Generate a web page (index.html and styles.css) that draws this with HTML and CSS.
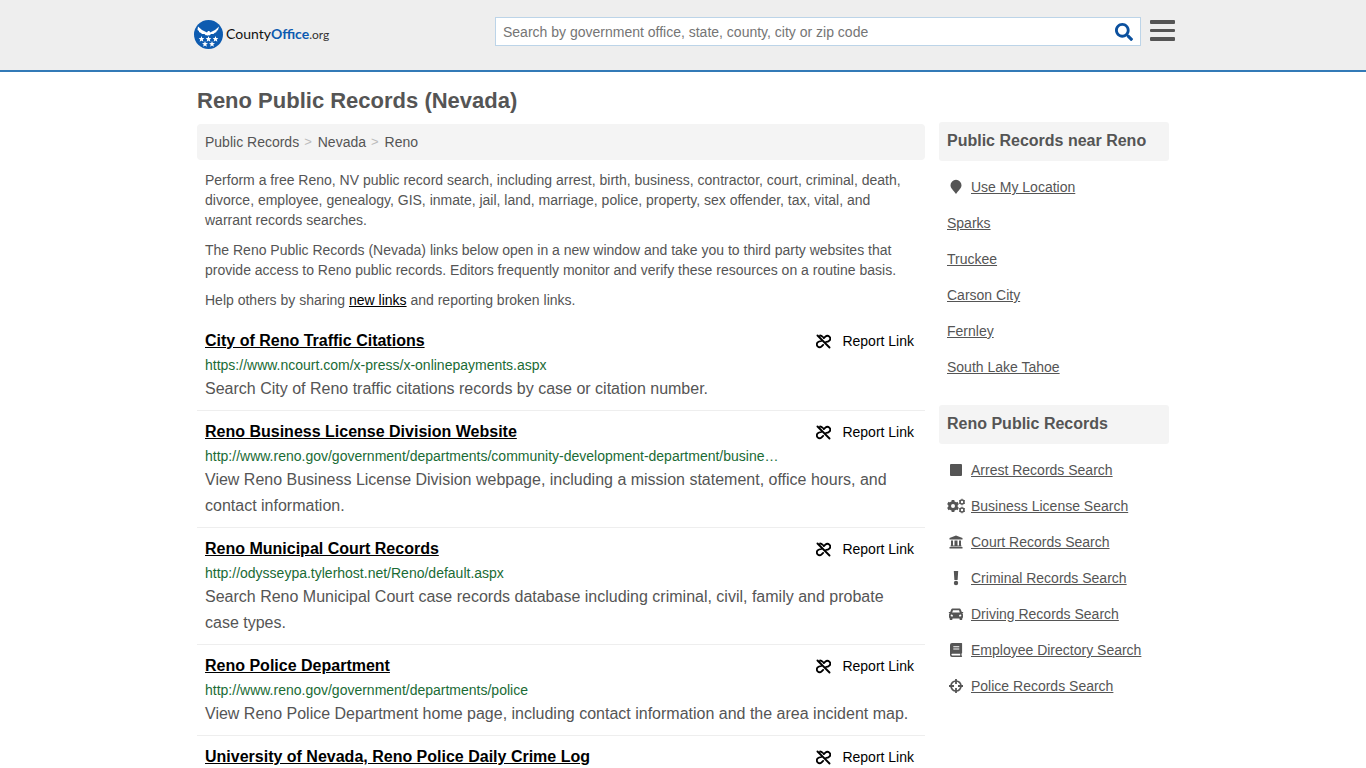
FILE: index.html
```html
<!DOCTYPE html>
<html lang="en">
<head>
  <meta charset="UTF-8">
  <meta name="viewport" content="width=device-width, initial-scale=1.0">
  <title>Reno Public Records (Nevada)</title>
  <link rel="stylesheet" href="styles.css">
</head>
<body>
  <!-- Shared icons -->
  <svg class="sprite" aria-hidden="true">
    <symbol id="icon-unlink" viewBox="2 2 20 20">
      <path fill="none" stroke="currentColor" stroke-width="2.500" stroke-linecap="round" stroke-linejoin="round" d="M4 4l16 16M7.500 4C9 4 10 4.800 11 5.800M12.500 7.500l2-2a3.700 3.700 0 0 1 5.300 5.300c-1.300 1.300-2.800 1.700-4.300 1.700M11.500 16.500l-2 2a3.700 3.700 0 0 1-5.300-5.300c1.300-1.300 2.800-1.700 4.300-1.700"/>
    </symbol>
    <symbol id="star" viewBox="0 0 10 10">
      <path d="M5 0l1.300 3.400 3.700.2-2.900 2.300 1 3.600L5 7.500 1.900 9.500l1-3.600L0 3.600l3.700-.2z"/>
    </symbol>
  </svg>

  <header class="header">
    <div class="header-inner">
      <a class="logo" href="#">
        <svg class="logo-mark" viewBox="0 0 58 58" aria-hidden="true">
          <circle cx="29" cy="29" r="29" fill="#0d5bb0"/>
          <g fill="#fff">
            <path d="M8 13l8 7 8 4 2 1 2-3 3 0 1 3 2-1 8-4 8-7-2 7-3 2 0 2-4 2-2 2-5 0-3 3-2-1-1 2-2-2-2 1-3-3-5 0-2-2-4-2 0-2-3-2z"/>
            <use href="#star" x="9" y="32" width="12" height="12"/>
            <use href="#star" x="23" y="32" width="12" height="12"/>
            <use href="#star" x="37" y="32" width="12" height="12"/>
            <use href="#star" x="16" y="42" width="12" height="12"/>
            <use href="#star" x="30" y="42" width="12" height="12"/>
          </g>
        </svg>
        <span class="logo-text">County<b>Office</b><small>.org</small></span>
      </a>
      <form class="search">
        <input type="text" aria-label="Search" placeholder="Search by government office, state, county, city or zip code">
        <button type="button" aria-label="Submit search">
          <svg viewBox="0 0 512 512"><path fill="currentColor" d="M505 442.700L405.300 343c-4.500-4.500-10.600-7-17-7H372c27.600-35.300 44-79.700 44-128C416 93.100 322.900 0 208 0S0 93.100 0 208s93.100 208 208 208c48.300 0 92.700-16.400 128-44v16.300c0 6.400 2.500 12.500 7 17l99.700 99.700c9.400 9.400 24.600 9.400 33.900 0l28.300-28.300c9.400-9.400 9.400-24.600.1-34zM208 336c-70.700 0-128-57.200-128-128 0-70.700 57.200-128 128-128 70.700 0 128 57.200 128 128 0 70.700-57.200 128-128 128z"/></svg>
        </button>
      </form>
      <button class="menu" type="button" aria-label="Menu">
        <svg viewBox="0 0 25 21"><g fill="#555"><rect width="25" height="4" rx="1"/><rect y="9" width="25" height="3" rx="1"/><rect y="17" width="25" height="4" rx="1"/></g></svg>
      </button>
    </div>
  </header>

  <div class="container">
    <main class="main">
      <h1>Reno Public Records (Nevada)</h1>
      <nav class="breadcrumb">
        <a href="#">Public Records</a><span>&gt;</span><a href="#">Nevada</a><span>&gt;</span><a href="#">Reno</a>
      </nav>

      <div class="intro">
        <p>Perform a free Reno, NV public record search, including arrest, birth, business, contractor, court, criminal, death, divorce, employee, genealogy, GIS, inmate, jail, land, marriage, police, property, sex offender, tax, vital, and warrant records searches.</p>
        <p>The Reno Public Records (Nevada) links below open in a new window and take you to third party websites that provide access to Reno public records. Editors frequently monitor and verify these resources on a routine basis.</p>
        <p>Help others by sharing <a href="#">new links</a> and reporting broken links.</p>
      </div>

      <!-- Results -->
      <div class="result">
        <div class="result-head">
          <a class="title" href="#">City of Reno Traffic Citations</a>
          <a class="report" href="#"><svg aria-hidden="true"><use href="#icon-unlink"/></svg>Report Link</a>
        </div>
        <div class="url">https://www.ncourt.com/x-press/x-onlinepayments.aspx</div>
        <div class="desc">Search City of Reno traffic citations records by case or citation number.</div>
      </div>
      <div class="result">
        <div class="result-head">
          <a class="title" href="#">Reno Business License Division Website</a>
          <a class="report" href="#"><svg aria-hidden="true"><use href="#icon-unlink"/></svg>Report Link</a>
        </div>
        <div class="url">http://www.reno.gov/government/departments/community-development-department/busine…</div>
        <div class="desc">View Reno Business License Division webpage, including a mission statement, office hours, and contact information.</div>
      </div>
      <div class="result">
        <div class="result-head">
          <a class="title" href="#">Reno Municipal Court Records</a>
          <a class="report" href="#"><svg aria-hidden="true"><use href="#icon-unlink"/></svg>Report Link</a>
        </div>
        <div class="url">http://odysseypa.tylerhost.net/Reno/default.aspx</div>
        <div class="desc">Search Reno Municipal Court case records database including criminal, civil, family and probate case types.</div>
      </div>
      <div class="result">
        <div class="result-head">
          <a class="title" href="#">Reno Police Department</a>
          <a class="report" href="#"><svg aria-hidden="true"><use href="#icon-unlink"/></svg>Report Link</a>
        </div>
        <div class="url">http://www.reno.gov/government/departments/police</div>
        <div class="desc">View Reno Police Department home page, including contact information and the area incident map.</div>
      </div>
      <div class="result">
        <div class="result-head">
          <a class="title" href="#">University of Nevada, Reno Police Daily Crime Log</a>
          <a class="report" href="#"><svg aria-hidden="true"><use href="#icon-unlink"/></svg>Report Link</a>
        </div>
      </div>
    </main>

    <aside class="sidebar">
      <h2>Public Records near Reno</h2>
      <ul>
        <li>
          <svg viewBox="0 0 16 16"><path d="M8 15C5 11 2.500 9 2.500 6.300a5.500 5.500 0 0 1 11 0C13.500 9 11 11 8 15z"/></svg>
          <a href="#">Use My Location</a>
        </li>
        <li><a href="#">Sparks</a></li>
        <li><a href="#">Truckee</a></li>
        <li><a href="#">Carson City</a></li>
        <li><a href="#">Fernley</a></li>
        <li><a href="#">South Lake Tahoe</a></li>
      </ul>

      <h2>Reno Public Records</h2>
      <ul>
        <li>
          <svg viewBox="0 0 16 16"><rect x="2" y="2" width="12" height="12" rx="1"/></svg>
          <a href="#">Arrest Records Search</a>
        </li>
        <li>
          <svg viewBox="0 0 18 16">
            <g fill="none" stroke="#555">
              <circle cx="6" cy="8" r="3.400" stroke-width="2.800"/>
              <path stroke-width="2.800" d="M6 2v2M6 12v2M.8 5l1.700 1M9.500 10l1.700 1M.8 11l1.700-1M9.500 6l1.700-1"/>
              <circle cx="15" cy="4" r="2" stroke-width="1.600"/>
              <circle cx="15" cy="12" r="2" stroke-width="1.600"/>
              <path stroke-width="1.200" d="M15 .8v.8M15 6.400v.8M12.200 2.400l.7.400M17.100 5.200l.7.400M12.200 5.600l.7-.4M17.100 2.800l.7-.4M15 8.800v.8M15 14.400v.8M12.200 10.400l.7.400M17.100 13.200l.7.400M12.200 13.600l.7-.4M17.100 10.800l.7-.4"/>
            </g>
          </svg>
          <a href="#">Business License Search</a>
        </li>
        <li>
          <svg viewBox="0 0 16 16"><path d="M8 1.500l6.500 2.500V5.500h-13V4zM3 6.500h2v5h1.500v-5h3v5H11v-5h2v5h.5v1h-11v-1H3zM1.500 13h13v1.500h-13z"/></svg>
          <a href="#">Court Records Search</a>
        </li>
        <li>
          <svg viewBox="0 0 16 16"><path d="M5.800 1h4.400l-.6 9H6.400z"/><circle cx="8" cy="13" r="2.200"/></svg>
          <a href="#">Criminal Records Search</a>
        </li>
        <li>
          <svg viewBox="0 0 16 16"><path fill-rule="evenodd" d="M5 2.500h6c1 0 1.600.5 2 1.400l.8 2h1c.5 0 .7.700.1 1l-.6.3c.5.400.7.900.7 1.500V11c0 .5-.3.900-.7 1.200V13c0 .6-.4 1-1 1h-.8c-.6 0-1-.4-1-1v-.5h-7v.5c0 .6-.4 1-1 1h-.8c-.6 0-1-.4-1-1v-.8C1.300 11.900 1 11.500 1 11V8.700c0-.6.200-1.100.7-1.500l-.6-.3c-.6-.3-.4-1 .1-1h1l.8-2c.4-.9 1-1.400 2-1.400zM5 4.200L4.200 6.500h7.600L11 4.200zM3.700 8.500a1 1 0 1 0 0 2.100c.7 0 1.300 0 1.300-.5S4.500 8.500 3.700 8.500zm8.600 0c-.8 0-1.300 1.100-1.300 1.600s.6.500 1.300.5a1 1 0 1 0 0-2.100z"/></svg>
          <a href="#">Driving Records Search</a>
        </li>
        <li>
          <svg viewBox="0 0 16 16"><path fill-rule="evenodd" d="M4 1h9.500a.6.600 0 0 1 .6.600v9.400l-.6.800v1.600c.4 0 .6.200.6.600v.3c0 .4-.2.700-.6.700H4a2 2 0 0 1-2-2V3a2 2 0 0 1 2-2zm1.300 3.200v1.100h6V4.200zm0 2.300v1.100h6V6.500zM4.200 11.800a.8.800 0 0 0 0 1.600h8v-1.600z"/></svg>
          <a href="#">Employee Directory Search</a>
        </li>
        <li>
          <svg viewBox="0 0 16 16"><circle cx="8" cy="8" r="5" fill="none" stroke="#555" stroke-width="1.700"/><path fill="none" stroke="#555" stroke-width="1.800" d="M8 1v5M8 10v5M1 8h5M10 8h5"/></svg>
          <a href="#">Police Records Search</a>
        </li>
      </ul>
    </aside>
  </div>
</body>
</html>
```
FILE: styles.css
```css
* {
  box-sizing: border-box;
}

body {
  margin: 0;
  font-family: Arial, "Liberation Sans", sans-serif;
  font-size: 14px;
  line-height: 20px;
  color: #555;
  background-color: #fff;
}

a {
  color: inherit;
}

button {
  padding: 0;
  border: none;
  background: none;
  cursor: pointer;
}

.sprite {
  display: none;
}

/* Header */
.header {
  height: 72px;
  background-color: #eee;
  border-bottom: 2px solid #337ab7;
}

.header-inner {
  display: flex;
  align-items: flex-start;
  max-width: 984px;
  margin: 0 auto;
  padding-left: 3px;
}

.logo {
  display: flex;
  align-items: center;
  gap: 3px;
  width: 301px;
  padding-top: 20px;
  text-decoration: none;
}

.logo-mark {
  width: 29px;
  height: 29px;
}

.logo-text {
  font-family: Lato, sans-serif;
  font-size: 14px;
  line-height: 22px;
  color: #111;
}

.logo-text b {
  color: #0d5bb0;
}

.logo-text small {
  font-size: 12px;
  color: #333;
}

.search {
  display: flex;
  flex: 1;
  height: 29px;
  margin-top: 17px;
  background-color: #fff;
  border: 1px solid #bcd4e8;
}

.search input {
  flex: 1;
  min-width: 0;
  padding: 0 7px;
  border: none;
  outline: none;
  background: none;
  font-family: inherit;
  font-size: 14px;
  color: #555;
}

.search input::placeholder {
  color: #757575;
}

.search button {
  width: 32px;
  color: #0b509e;
}

.search svg {
  display: block;
  width: 18px;
  height: 18px;
  margin: 0 auto;
}

.menu {
  width: 25px;
  margin: 20px 0 0 9px;
}

.menu svg {
  display: block;
  width: 25px;
  height: 21px;
}

/* Layout */
.container {
  display: grid;
  grid-template-columns: minmax(0, 1fr) 230px;
  gap: 14px;
  max-width: 972px;
  margin: 0 auto;
}

h1 {
  margin: 17px 0 11px;
  font-size: 22px;
  line-height: 24px;
}

.breadcrumb {
  display: flex;
  padding: 8px;
  background-color: #f4f4f4;
  border-radius: 4px;
}

.breadcrumb a {
  text-decoration: none;
}

.breadcrumb span {
  padding: 0 6px 0 5px;
  font-size: 13px;
  color: #bbb;
}

.intro {
  padding: 0 8px;
}

.intro p {
  margin: 10px 0;
}

.intro a {
  color: #000;
}

/* Results */
.result {
  padding: 9px 8px 8px;
  border-bottom: 1px solid #eee;
}

.result:last-child {
  padding-bottom: 0;
  border-bottom: none;
}

.result-head {
  display: flex;
  justify-content: space-between;
  padding-right: 3px;
  line-height: 24px;
  color: #000;
}

.title {
  font-size: 16px;
  font-weight: bold;
}

.report {
  display: flex;
  align-items: center;
  gap: 11px;
  text-decoration: none;
}

.report svg {
  width: 15px;
  height: 15px;
}

.url {
  padding-top: 1px;
  line-height: 22px;
  color: #1a6b35;
}

.desc {
  font-size: 16px;
  line-height: 26px;
}

/* Sidebar */
.sidebar {
  padding-top: 50px;
}

.sidebar h2 {
  margin: 0 0 8px;
  padding: 9px 8px 10px;
  font-size: 16px;
  line-height: 20px;
  background-color: #f4f4f4;
  border-radius: 3px;
}

.sidebar ul {
  margin: 0 0 20px;
  padding: 0 8px;
  list-style: none;
}

.sidebar li {
  display: flex;
  align-items: center;
  gap: 6px;
  height: 36px;
}

.sidebar li svg {
  width: 18px;
  height: 16px;
  fill: #555;
}
```
